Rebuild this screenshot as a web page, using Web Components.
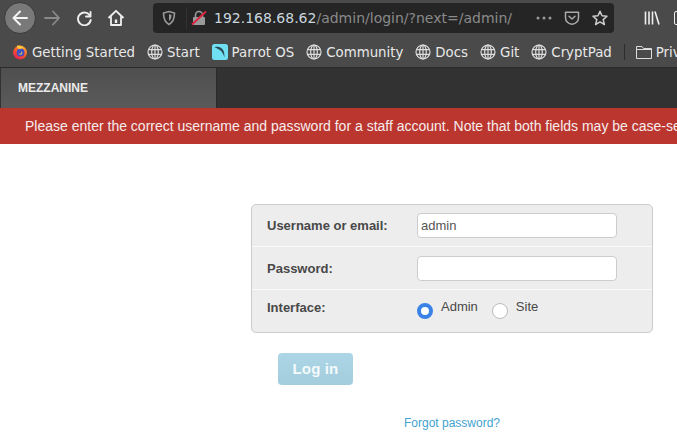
<!DOCTYPE html>
<html><head><meta charset="utf-8"><style>
html,body{margin:0;padding:0;background:#fff;width:677px;height:440px;overflow:hidden}
body{font-family:"Liberation Sans",Arial,sans-serif}
</style></head><body>
<browser-toolbar></browser-toolbar>
<bookmark-bar>
<book-mark kind="fox" style="margin-left:12px">Getting Started</book-mark>
<book-mark>Start</book-mark>
<book-mark kind="parrot">Parrot OS</book-mark>
<book-mark>Community</book-mark>
<book-mark>Docs</book-mark>
<book-mark>Git</book-mark>
<book-mark>CryptPad</book-mark>
</bookmark-bar>
<admin-header>MEZZANINE</admin-header>
<alert-bar>Please enter the correct username and password for a staff account. Note that both fields may be case-sensitive.</alert-bar>
<login-form></login-form>
<script>
const def=(n,html,extra)=>customElements.define(n,class extends HTMLElement{constructor(){super();this.attachShadow({mode:'open'}).innerHTML=html;}connectedCallback(){extra&&extra.call(this)}});
const globe=`<svg width="16" height="16" viewBox="0 0 16 16" fill="none" stroke="#ddd" stroke-width="1.2"><circle cx="8" cy="8" r="7"/><ellipse cx="8" cy="8" rx="3.3" ry="7"/><path d="M1.4 5.6h13.2M1.4 10.4h13.2M8 1v14"/></svg>`;
const fox=`<svg width="16" height="16" viewBox="0 0 16 16"><defs><linearGradient id="f" x1="0.8" y1="0" x2="0.2" y2="1"><stop offset="0" stop-color="#ffb02e"/><stop offset=".55" stop-color="#f6512c"/><stop offset="1" stop-color="#d8195f"/></linearGradient></defs><circle cx="8" cy="8.6" r="7" fill="url(#f)"/><circle cx="8.6" cy="8.4" r="3.9" fill="#3d4fc4"/><path d="M5 1.5C8 1.2 11 2.4 12.6 5 10.8 3.9 9 4.2 7.6 5.2 6 5 5 3.4 5 1.5Z" fill="#ffc93a"/><path d="M9.2 7c1.3.6 1.5 2.3.4 3.2-1 .8-2.7.5-3.4-.7 1.2.6 2.3.4 2.9-.3.5-.6.5-1.4.1-2.2Z" fill="#ffd24a"/></svg>`;
const parrot=`<svg width="16" height="16" viewBox="0 0 16 16"><rect width="16" height="16" rx="2.5" fill="#6fe0f2"/><path d="M2.5 3.2C6 2 9.8 3.2 11.4 6.5c.8 1.800 1.100 4 1 6.800-.9-2.700-2-5-3.600-6.500C7.300 5.400 5 4.200 2.500 3.200Z" fill="#2c4a55"/></svg>`;
def('browser-toolbar',`<style>
:host{display:flex;align-items:center;height:36px;background:#4a4a4a;box-sizing:border-box;padding-left:4px;font-family:"DejaVu Sans",sans-serif;overflow:hidden}
.back{width:32px;height:32px;flex:none;border-radius:50%;background:#797979;border:1px solid #3a3a3a;box-sizing:border-box;display:flex;align-items:center;justify-content:center}
.b{width:32px;height:32px;flex:none;display:flex;align-items:center;justify-content:center}
.url{margin-left:21px;flex:none;width:461px;height:30px;background:#252525;border-radius:4px;display:flex;align-items:center;box-sizing:border-box}
.shield{margin-left:8px;width:26px;flex:none;display:flex;border-right:1px solid #333;height:22px;align-items:center;box-sizing:border-box}
.lock{margin-left:4px;display:flex;flex:none}
.t{margin-left:7px;font-size:14px;color:#c9d6df;white-space:nowrap}.t span{color:#8a8a8a}
.r{margin-left:auto;display:flex;align-items:center;gap:12px;padding-right:6px;flex:none}
.lib{margin-left:30px;display:flex;flex:none}
.side{margin-left:14px;flex:none;width:16px;height:14px;border:1.600px solid #eee;border-radius:2px;box-sizing:border-box}
</style>
<div class="back"><svg width="18" height="18" viewBox="0 0 18 18" fill="none" stroke="#f4f4f4" stroke-width="2" stroke-linecap="round" stroke-linejoin="round"><path d="M16 9H2.500M9 2.500 2.500 9 9 15.500"/></svg></div>
<div class="b"><svg width="18" height="18" viewBox="0 0 18 18" fill="none" stroke="#8a8a8a" stroke-width="1.800" stroke-linecap="round" stroke-linejoin="round"><path d="M2 9h14M10 2.500 16 9l-6 6.500"/></svg></div>
<div class="b"><svg width="16" height="16" viewBox="0 0 16 16" fill="none" stroke="#eee" stroke-width="1.900" stroke-linecap="round" stroke-linejoin="round"><path d="M14.500 2v4.500H10"/><path d="M14.200 6.200A6.400 6.400 0 1 0 14.700 10"/></svg></div>
<div class="b"><svg width="18" height="18" viewBox="0 0 18 18" fill="none" stroke="#f0f0f0" stroke-width="1.800" stroke-linejoin="round"><path d="M1.500 9 9 1.800 16.500 9M4 7.500V16h10V7.500"/><rect x="7.800" y="10.500" width="2.400" height="3.500" fill="#f0f0f0" stroke="none"/></svg></div>
<div class="url">
<div class="shield"><svg width="16" height="16" viewBox="0 0 16 16" fill="none"><path d="M8 1.500 13.500 3c0 5-1 9-5.500 11.500C3.500 12 2.500 8 2.500 3Z" stroke="#9a9a9a" stroke-width="1.600"/><path d="M8 4 10.500 5c0 2.500-.5 4.500-2.500 6Z" fill="#9a9a9a"/></svg></div>
<div class="lock"><svg width="16" height="16" viewBox="0 0 16 16"><rect x="2" y="7" width="12" height="8" rx="1" fill="#9a9a9a"/><path d="M4.500 7V5a3.500 3.500 0 0 1 7 0v2" fill="none" stroke="#9a9a9a" stroke-width="1.600"/><path d="M1 14.500 15 1.500" stroke="#e0243f" stroke-width="1.800"/></svg></div>
<div class="t">192.168.68.62<span>/admin/login/?next=/admin/</span></div>
<div class="r">
<svg width="16" height="6" viewBox="0 0 16 6" fill="#9a9a9a"><circle cx="2" cy="3" r="1.500"/><circle cx="8" cy="3" r="1.500"/><circle cx="14" cy="3" r="1.500"/></svg>
<svg width="16" height="16" viewBox="0 0 16 16" fill="none" stroke="#aaa" stroke-width="1.500" stroke-linecap="round" stroke-linejoin="round"><path d="M1.500 2.200h13v5.500a6.500 6.500 0 0 1-13 0Z"/><path d="M5 6.200 8 9l3-2.800"/></svg>
<svg width="16" height="16" viewBox="0 0 16 16" fill="none" stroke="#ccc" stroke-width="1.500" stroke-linejoin="round"><path d="M8 1.200 10 5.800l5 .5-3.800 3.300 1.200 4.900L8 11.900 3.600 14.500l1.200-4.900L1 6.300l5-.5Z"/></svg>
</div></div>
<div class="lib"><svg width="16" height="16" viewBox="0 0 16 16" fill="none" stroke="#eee" stroke-width="1.600"><path d="M1.500 1.500v13M5 1.500v13M8.500 1.500v13M11 1.500l4 13"/></svg></div><div class="side"></div>`);
def('book-mark',`<style>
:host{display:inline-flex;flex:none;align-items:center;gap:4px;color:#e8e8e8;font:13.33px "DejaVu Sans",sans-serif;white-space:nowrap;margin-right:12px}
.i{display:flex}
</style><span class="i"></span><slot></slot>`,function(){const k=this.getAttribute('kind');this.shadowRoot.querySelector('.i').innerHTML=k=='fox'?fox:k=='parrot'?parrot:globe;});
def('bookmark-bar',`<style>
:host{display:flex;align-items:center;height:32px;padding-top:1px;background:#4a4a4a;border-bottom:1px solid #2c2c2c;box-sizing:border-box;overflow:hidden;white-space:nowrap}
.sep{width:1px;height:16px;background:#2e2e2e;margin:0 11px 0 0;flex:none}
.p{display:flex;flex:none;align-items:center;gap:4px;color:#e8e8e8;font:13.33px "DejaVu Sans",sans-serif}
</style><slot></slot><span class="sep"></span><span class="p"><svg width="16" height="16" viewBox="0 0 16 16" fill="none" stroke="#ddd" stroke-width="1"><path d="M.5 14.500v-12h5.500l1.500 2h8v10Z"/><path d="M.5 5.500h15"/></svg>Private</span>`);
def('admin-header',`<style>
:host{display:block;height:40px;background:#323232}
.tab{width:216px;height:40px;margin-left:1px;background:linear-gradient(#4f4f4f,#5a5a5a);border-right:1px solid #2a2a2a;box-sizing:border-box;padding-left:17px;display:flex;align-items:center;color:#eaeaea;font:bold 12px "Liberation Sans",sans-serif}
</style><div class="tab"><slot></slot></div>`);
def('alert-bar',`<style>
:host{display:block;height:36px;background:#bb362f;color:#f6ecec;font:14px/36px "Liberation Sans",sans-serif;padding-left:25px;white-space:nowrap;overflow:hidden}
</style><slot></slot>`);
def('login-form',`<style>
:host{display:block;padding:60px 0 0 251px;font:13px "Liberation Sans",sans-serif;color:#484848}
.box{width:402px;height:129px;box-sizing:border-box;background:#ededed;border:1px solid #ccc;border-radius:5px;display:grid;grid-template-rows:42px 43px 1fr}
.row{display:flex;align-items:center;padding-left:15px;border-bottom:1px solid #fafafa;box-sizing:border-box}
.row:last-child{border:0;align-items:flex-start;padding-top:10px}
label{font-weight:bold;width:150px;flex:none}
.in{width:200px;height:25px;box-sizing:border-box;background:#fff;border:1px solid #ccc;border-radius:4px;padding-left:3px;line-height:23px;color:#555}
.radio{width:16px;height:16px;border-radius:50%;box-sizing:border-box;flex:none;margin-top:3px}
.on{border:4.500px solid #3b82e6;background:#fff}.off{border:1px solid #bbb;background:#fff;margin-left:14px}
.opt{margin-left:8px;font-size:13px;margin-top:-1px}
.btn{margin:20px 0 0 27px;width:75px;height:32px;border-radius:4px;background:linear-gradient(#acd6e6,#a3cddd);color:#f4fafc;font:bold 15px/32px "Liberation Sans",sans-serif;text-align:center;letter-spacing:.15px}
.fg{margin:31px 0 0 153px;font-size:12px;color:#3fa2cf}
</style>
<div class="box">
<div class="row"><label>Username or email:</label><div class="in">admin</div></div>
<div class="row"><label>Password:</label><div class="in"></div></div>
<div class="row"><label>Interface:</label><span class="radio on"></span><span class="opt">Admin</span><span class="radio off"></span><span class="opt">Site</span></div>
</div>
<div class="btn">Log in</div>
<div class="fg">Forgot password?</div>`);
</script>
</body></html>
